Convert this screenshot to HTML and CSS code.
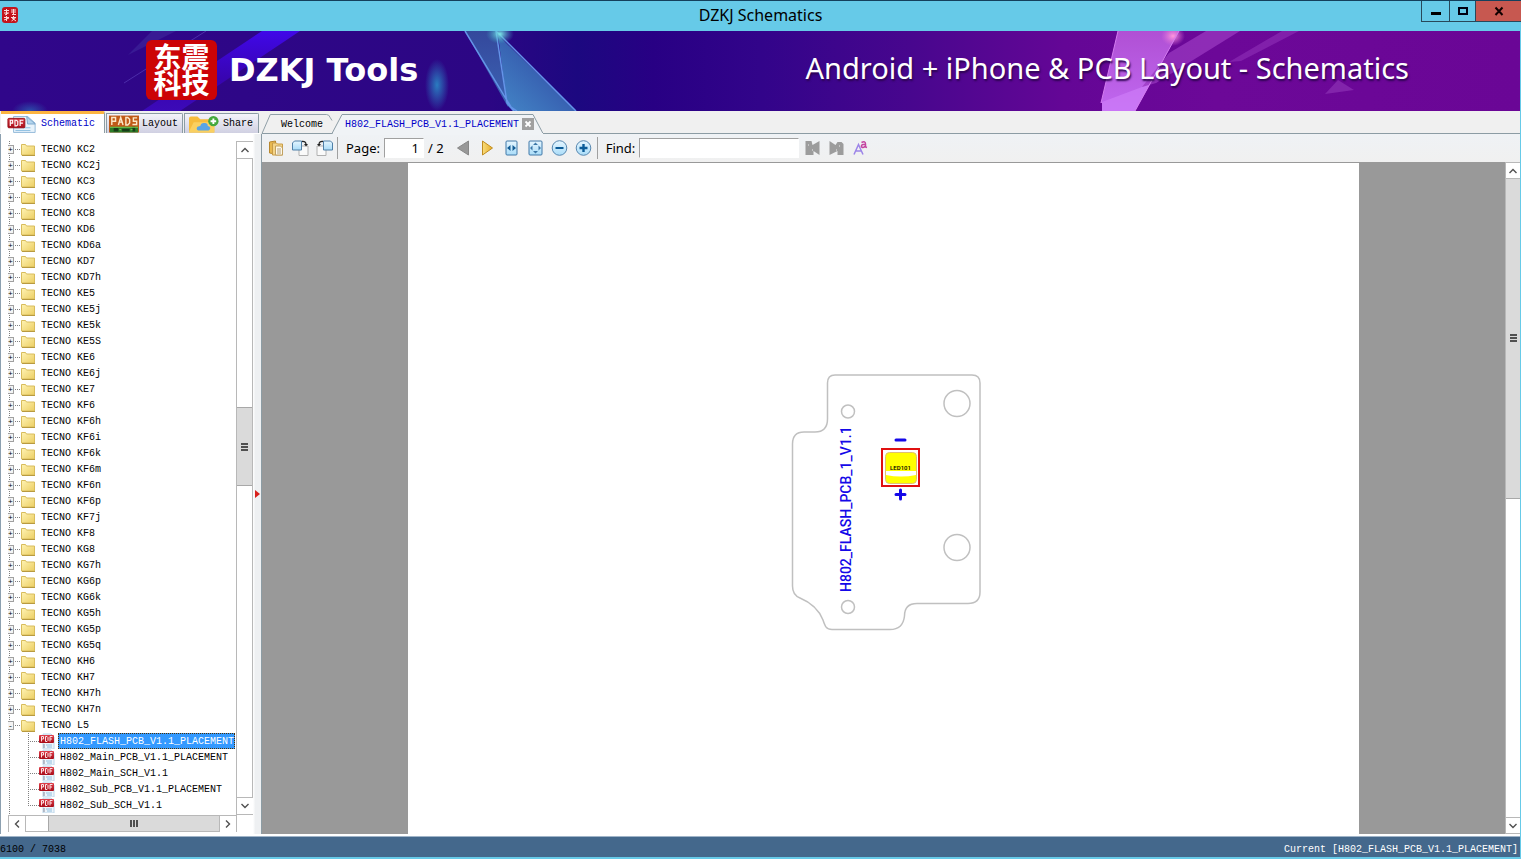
FILE: index.html
```html
<!DOCTYPE html>
<html lang="en">
<head>
<meta charset="utf-8">
<title>DZKJ Schematics</title>
<link rel="stylesheet" href="styles.css">
</head>
<body>
<svg class="defs" aria-hidden="true">
  <defs>
    <linearGradient id="gFolder" x1="0" y1="0" x2="1" y2="1"><stop offset="0" stop-color="#fff3b4"/><stop offset="1" stop-color="#ecce62"/></linearGradient>
    <linearGradient id="gPdf" x1="0" y1="0" x2="0" y2="1"><stop offset="0" stop-color="#e0404c"/><stop offset="1" stop-color="#a80c18"/></linearGradient>
    <linearGradient id="gBlue" x1="0" y1="0" x2="0" y2="1"><stop offset="0" stop-color="#e6f6ff"/><stop offset="1" stop-color="#a9dcf8"/></linearGradient>
    <linearGradient id="gGold" x1="0" y1="0" x2="1" y2="0"><stop offset="0" stop-color="#f8dc7c"/><stop offset="1" stop-color="#e8ae28"/></linearGradient>
  </defs>
  <symbol id="folder" viewBox="0 0 14 13"><path d="M.5 1.5h4l1 1.500h8v9H.5z" fill="url(#gFolder)" stroke="#d8bc5c"/><path d="M1 12.500h13" stroke="#b89a40"/></symbol>
  <symbol id="pdf" viewBox="0 0 16 16"><path d="M4 1h8l3 3v12H4z" fill="#edf5fb" stroke="#bcd6ea"/><path d="M7 12h6M8 14h5" stroke="#90bede"/><path d="M5 11v4" stroke="#889"/><rect x="0" y="2" width="15" height="8" rx="1" fill="url(#gPdf)"/><path d="M2.500 8.500v-5h2v2.500h-2M6.500 3.500v5h1.500l1-1v-3l-1-1zM11 8.500v-5h2.500M11 6h2" fill="none" stroke="#fbe3e5"/></symbol>
  <symbol id="up" viewBox="0 0 10 6"><path d="M1.500 5L5 1.500 8.500 5" fill="none" stroke="#505050" stroke-width="1.400"/></symbol>
</svg>

<div class="window">
  <header class="titlebar">
    <svg class="app-icon" viewBox="0 0 16 16"><rect width="16" height="16" rx="3" fill="#c4141c"/><path d="M2 3.500h5M2 6h5M4.500 2v6M3 8l3-2M9 3h5M9 5h5M10 7.500h4M11.500 2v5M2 10.500h5M4.500 9v5M2 13l5-2M9 10.500h5M11.500 9v3M9.500 14l4-3M10 11l4 3" stroke="#fbdada" fill="none"/></svg>
    <h1 class="title">DZKJ Schematics</h1>
    <div class="win-buttons">
      <button class="wb wb-min" aria-label="Minimize"><svg viewBox="0 0 10 10"><path d="M0 7.500h10" stroke="#000" stroke-width="3"/></svg></button>
      <button class="wb wb-max" aria-label="Maximize"><svg viewBox="0 0 10 10"><rect x="1" y="2" width="8" height="6" fill="none" stroke="#001" stroke-width="2"/></svg></button>
      <button class="wb wb-close" aria-label="Close"><svg viewBox="0 0 10 10"><path d="M1.500 1.500l7 7.500M8.500 1.500l-7 7.500" stroke="#100" stroke-width="2"/></svg></button>
    </div>
  </header>

  <div class="banner">
    <svg class="banner-art" viewBox="0 0 1520 80" preserveAspectRatio="none" aria-hidden="true">
      <defs>
        <linearGradient id="gBan" x1="0" x2="1" y1="0" y2="0"><stop offset="0" stop-color="#30068a"/><stop offset=".32" stop-color="#2c0684"/><stop offset=".38" stop-color="#1c0880"/><stop offset=".43" stop-color="#280084"/><stop offset=".5" stop-color="#32048a"/><stop offset=".6" stop-color="#48068e"/><stop offset=".7" stop-color="#640696"/><stop offset=".8" stop-color="#6c0898"/><stop offset="1" stop-color="#6a0696"/></linearGradient>
        <linearGradient id="gShard" x1="0" x2="0" y1="0" y2="1"><stop offset="0" stop-color="#34489c"/><stop offset="1" stop-color="#3c64b4"/></linearGradient>
        <linearGradient id="gShard2" x1="0" x2="1" y1="1" y2="0"><stop offset="0" stop-color="#4488c8"/><stop offset="1" stop-color="#2c3c9c"/></linearGradient>
        <linearGradient id="gRay" x1="0" x2="0" y1="0" y2="1"><stop offset="0" stop-color="#4008e8"/><stop offset=".6" stop-color="#3804b0"/><stop offset="1" stop-color="#3c0ab8"/></linearGradient>
        <linearGradient id="gPink" x1="0" x2="0" y1="0" y2="1"><stop offset="0" stop-color="#b050d4"/><stop offset="1" stop-color="#c068f0"/></linearGradient>
        <radialGradient id="gGlow"><stop offset="0" stop-color="#2a7cc0"/><stop offset="1" stop-color="#2a7cc0" stop-opacity="0"/></radialGradient>
        <radialGradient id="gTeal"><stop offset="0" stop-color="#7ce8e8"/><stop offset="1" stop-color="#3aa0c0" stop-opacity="0"/></radialGradient>
        <radialGradient id="gRose"><stop offset="0" stop-color="#ff98dc"/><stop offset="1" stop-color="#e070d8" stop-opacity="0"/></radialGradient>
      </defs>
      <rect width="1520" height="80" fill="url(#gBan)"/>
      <path d="M262 0h38L180 80h-38z" fill="url(#gRay)"/>
      <path d="M152 0h24L128 24z" fill="#40289c" opacity=".6"/>
      <path d="M206 0L124 52" stroke="#6a54cc" opacity=".5"/>
      <ellipse cx="30" cy="80" rx="18" ry="10" fill="url(#gGlow)" opacity=".6"/>
      <ellipse cx="437" cy="54" rx="12" ry="26" fill="url(#gGlow)"/>
      <path d="M465 0h31l12 76-8-14z" fill="url(#gShard)"/>
      <path d="M498 4l9 70 6 6h63z" fill="url(#gShard2)"/>
      <path d="M465 0l46 76 6 4M496 0l11 72 7 8M496 0l80 80" stroke="#6494e8" stroke-width="1.500" fill="none"/>
      <ellipse cx="500" cy="3" rx="14" ry="10" fill="url(#gTeal)"/>
      <path d="M1118 0h61l-44 80h-33v-8h-1z" fill="url(#gPink)"/>
      <path d="M1102 71l48-18-15 27h-33z" fill="#d080fa" opacity=".6"/>
      <path d="M1206 0h34l-84 52-14 4 27-34z" fill="#9a38c0" opacity=".75"/>
      <path d="M1282 0h17l-58 30-12 1z" fill="#9030b8" opacity=".6"/>
      <path d="M1338 49l16 10-29 4z" fill="#8c30b4" opacity=".7"/>
      <ellipse cx="1173" cy="5" rx="12" ry="10" fill="url(#gRose)"/>
      <path d="M1118 0l-17 72M1179 0l-44 80" stroke="#d47cf0" fill="none"/>
    </svg>
    <div class="logo">东震<br>科技</div>
    <div class="brand">DZKJ Tools</div>
    <div class="tagline">Android + iPhone &amp; PCB Layout - Schematics</div>
  </div>

  <main class="main">
    <aside class="side">
      <nav class="side-tabs">
        <button class="stab stab-schematic active"><svg class="ic-schem" viewBox="0 0 32 18"><path d="M7 1h15l8 7v10H7z" fill="#e8f3fb" stroke="#90b8d8"/><path d="M21 1l9 8h-8z" fill="#b4d6ee" stroke="#7ca8cc"/><path d="M9 13h16M9 16h16" stroke="#88bce0"/><rect x="1" y="3" width="18" height="10" rx="1" fill="url(#gPdf)" stroke="#980c14"/><path d="M3.500 11V5h2.500v3H3.500M8.500 5v6H10l1.500-1V6L10 5zM14 11V5h3.500M14 8h3" fill="none" stroke="#fff" stroke-width="1.200"/></svg><span>Schematic</span></button>
        <button class="stab stab-layout"><svg class="ic-pads" viewBox="0 0 32 18"><rect width="32" height="18" fill="#c05a18"/><path d="M3 10V2h4v4H3M10 10l2.500-8L15 10M11 7h3M18 2v8h2l2-2V4l-2-2zM30 2.500h-4V6h3.500v3.500H25" fill="none" stroke="#fbe8c8" stroke-width="1.500"/><path d="M1 12h30v6H1z" fill="#2c7c28"/><path d="M5 13h5v4H5zM14 14h8v3h-8zM25 12h3v5h-3z" fill="#183c18"/><path d="M1 12.500h30M11 15h2M23 15h2" stroke="#78cc50"/></svg><span>Layout</span></button>
        <button class="stab stab-share"><svg class="ic-share" viewBox="0 0 32 18"><path d="M0 3q0-2 2-2h7l3 3h13q2 0 2 2v12H0z" fill="#f6bc3c"/><path d="M0 17L5 7h22v11H0z" fill="#fad060"/><path d="M10 16q-3-1-1-4 2-1 3-1 1-4 5-3 3 0 3 3 4 1 2 4-1 1-3 1z" fill="#58a4e4"/><circle cx="26" cy="6" r="5.500" fill="#44a83c"/><path d="M26 3v6M23 6h6" stroke="#fff" stroke-width="2"/></svg><span>Share</span></button>
      </nav>
      <div class="side-body">
        <div class="tree-area">
          <ul class="tree">
            <li><button class="exp" aria-label="Expand">+</button><svg class="folder"><use href="#folder"/></svg>TECNO KC2</li>
            <li><button class="exp" aria-label="Expand">+</button><svg class="folder"><use href="#folder"/></svg>TECNO KC2j</li>
            <li><button class="exp" aria-label="Expand">+</button><svg class="folder"><use href="#folder"/></svg>TECNO KC3</li>
            <li><button class="exp" aria-label="Expand">+</button><svg class="folder"><use href="#folder"/></svg>TECNO KC6</li>
            <li><button class="exp" aria-label="Expand">+</button><svg class="folder"><use href="#folder"/></svg>TECNO KC8</li>
            <li><button class="exp" aria-label="Expand">+</button><svg class="folder"><use href="#folder"/></svg>TECNO KD6</li>
            <li><button class="exp" aria-label="Expand">+</button><svg class="folder"><use href="#folder"/></svg>TECNO KD6a</li>
            <li><button class="exp" aria-label="Expand">+</button><svg class="folder"><use href="#folder"/></svg>TECNO KD7</li>
            <li><button class="exp" aria-label="Expand">+</button><svg class="folder"><use href="#folder"/></svg>TECNO KD7h</li>
            <li><button class="exp" aria-label="Expand">+</button><svg class="folder"><use href="#folder"/></svg>TECNO KE5</li>
            <li><button class="exp" aria-label="Expand">+</button><svg class="folder"><use href="#folder"/></svg>TECNO KE5j</li>
            <li><button class="exp" aria-label="Expand">+</button><svg class="folder"><use href="#folder"/></svg>TECNO KE5k</li>
            <li><button class="exp" aria-label="Expand">+</button><svg class="folder"><use href="#folder"/></svg>TECNO KE5S</li>
            <li><button class="exp" aria-label="Expand">+</button><svg class="folder"><use href="#folder"/></svg>TECNO KE6</li>
            <li><button class="exp" aria-label="Expand">+</button><svg class="folder"><use href="#folder"/></svg>TECNO KE6j</li>
            <li><button class="exp" aria-label="Expand">+</button><svg class="folder"><use href="#folder"/></svg>TECNO KE7</li>
            <li><button class="exp" aria-label="Expand">+</button><svg class="folder"><use href="#folder"/></svg>TECNO KF6</li>
            <li><button class="exp" aria-label="Expand">+</button><svg class="folder"><use href="#folder"/></svg>TECNO KF6h</li>
            <li><button class="exp" aria-label="Expand">+</button><svg class="folder"><use href="#folder"/></svg>TECNO KF6i</li>
            <li><button class="exp" aria-label="Expand">+</button><svg class="folder"><use href="#folder"/></svg>TECNO KF6k</li>
            <li><button class="exp" aria-label="Expand">+</button><svg class="folder"><use href="#folder"/></svg>TECNO KF6m</li>
            <li><button class="exp" aria-label="Expand">+</button><svg class="folder"><use href="#folder"/></svg>TECNO KF6n</li>
            <li><button class="exp" aria-label="Expand">+</button><svg class="folder"><use href="#folder"/></svg>TECNO KF6p</li>
            <li><button class="exp" aria-label="Expand">+</button><svg class="folder"><use href="#folder"/></svg>TECNO KF7j</li>
            <li><button class="exp" aria-label="Expand">+</button><svg class="folder"><use href="#folder"/></svg>TECNO KF8</li>
            <li><button class="exp" aria-label="Expand">+</button><svg class="folder"><use href="#folder"/></svg>TECNO KG8</li>
            <li><button class="exp" aria-label="Expand">+</button><svg class="folder"><use href="#folder"/></svg>TECNO KG7h</li>
            <li><button class="exp" aria-label="Expand">+</button><svg class="folder"><use href="#folder"/></svg>TECNO KG6p</li>
            <li><button class="exp" aria-label="Expand">+</button><svg class="folder"><use href="#folder"/></svg>TECNO KG6k</li>
            <li><button class="exp" aria-label="Expand">+</button><svg class="folder"><use href="#folder"/></svg>TECNO KG5h</li>
            <li><button class="exp" aria-label="Expand">+</button><svg class="folder"><use href="#folder"/></svg>TECNO KG5p</li>
            <li><button class="exp" aria-label="Expand">+</button><svg class="folder"><use href="#folder"/></svg>TECNO KG5q</li>
            <li><button class="exp" aria-label="Expand">+</button><svg class="folder"><use href="#folder"/></svg>TECNO KH6</li>
            <li><button class="exp" aria-label="Expand">+</button><svg class="folder"><use href="#folder"/></svg>TECNO KH7</li>
            <li><button class="exp" aria-label="Expand">+</button><svg class="folder"><use href="#folder"/></svg>TECNO KH7h</li>
            <li><button class="exp" aria-label="Expand">+</button><svg class="folder"><use href="#folder"/></svg>TECNO KH7n</li>
            <li><button class="exp" aria-label="Collapse">-</button><svg class="folder"><use href="#folder"/></svg>TECNO L5</li>
            <li class="file"><svg class="pdf"><use href="#pdf"/></svg><span class="name selected">H802_FLASH_PCB_V1.1_PLACEMENT</span></li>
            <li class="file"><svg class="pdf"><use href="#pdf"/></svg><span class="name">H802_Main_PCB_V1.1_PLACEMENT</span></li>
            <li class="file"><svg class="pdf"><use href="#pdf"/></svg><span class="name">H802_Main_SCH_V1.1</span></li>
            <li class="file"><svg class="pdf"><use href="#pdf"/></svg><span class="name">H802_Sub_PCB_V1.1_PLACEMENT</span></li>
            <li class="file"><svg class="pdf"><use href="#pdf"/></svg><span class="name">H802_Sub_SCH_V1.1</span></li>
          </ul>
          <div class="scroll scroll-v">
            <button class="sbtn" aria-label="Scroll up"><svg class="chev"><use href="#up"/></svg></button>
            <div class="track tree-track"><div class="thumb"><i class="grip"></i></div></div>
            <button class="sbtn" aria-label="Scroll down"><svg class="chev down"><use href="#up"/></svg></button>
          </div>
        </div>
        <div class="scroll scroll-h">
          <button class="sbtn" aria-label="Scroll left"><svg class="chev left"><use href="#up"/></svg></button>
          <div class="track h-track"><div class="thumb"><i class="grip grip-h"></i></div></div>
          <button class="sbtn" aria-label="Scroll right"><svg class="chev right"><use href="#up"/></svg></button>
        </div>
      </div>
    </aside>
    <div class="splitter"><svg viewBox="0 0 5 8"><path d="M0 0l5 4-5 4z" fill="#d8201c"/></svg></div>

    <section class="work">
      <nav class="doc-tabs">
        <button class="dtab dtab-welcome"><svg class="outline" viewBox="0 0 76 20" preserveAspectRatio="none"><path d="M0 19.500L9 .5h61q3 0 4 3l2 3" fill="none" stroke="#8c9ca4"/></svg><span>Welcome</span></button>
        <button class="dtab dtab-doc"><svg class="outline" viewBox="0 0 212 20" preserveAspectRatio="none"><path d="M0 19.500L10 .5h191l10 19" fill="#f0f3f6" stroke="#8c9ca4"/><path d="M1 20h210" stroke="#f0f3f6" stroke-width="2"/></svg><span>H802_FLASH_PCB_V1.1_PLACEMENT</span><i class="tab-x"><svg viewBox="0 0 8 8"><path d="M1.500 1.500l5 5M6.500 1.500l-5 5" stroke="#fff" stroke-width="1.800"/></svg></i></button>
      </nav>
      <div class="toolbar">
        <button class="tb" aria-label="Open"><svg viewBox="0 0 16 16"><path d="M1 2l6-1v13l-6-1z" fill="#e8b850" stroke="#b88830"/><path d="M4 3h4l1 1h5v11H4z" fill="#f4d488" stroke="#c89c48"/><path d="M7 6h5l2 2v7H7z" fill="#fff8e8" stroke="#c0a060"/><path d="M8.500 9h4M8.500 11h4M8.500 13h4" stroke="#b0a080"/></svg></button>
        <button class="tb" aria-label="Rotate right"><svg viewBox="0 0 17 16"><path d="M7 6h9v9.500H7z" fill="#fafafa" stroke="#b0b0b0"/><path d="M.5 3l2-2h7v9h-9z" fill="url(#gBlue)" stroke="#5080a8"/><path d="M10 1.500q4-.5 4 3" fill="none" stroke="#222" stroke-width="1.300"/><path d="M12 4h4l-2 2.500z" fill="#222"/></svg></button>
        <button class="tb" aria-label="Rotate left"><svg viewBox="0 0 17 16"><path d="M1 6h9v9.500H1z" fill="#fafafa" stroke="#b0b0b0"/><path d="M7.500 1h7l2 2v7h-9z" fill="url(#gBlue)" stroke="#5080a8"/><path d="M7 1.500q-4-.5-4 3" fill="none" stroke="#222" stroke-width="1.300"/><path d="M1 4h4L3 6.500z" fill="#222"/></svg></button>
        <i class="sep"></i>
        <label class="lbl" for="page">Page:</label>
        <input id="page" class="page-input" type="text" value="1">
        <span class="total">/ 2</span>
        <button class="tb" aria-label="Previous page"><svg viewBox="0 0 16 16"><path d="M13 1v14L2 8z" fill="#989898" stroke="#888"/></svg></button>
        <button class="tb" aria-label="Next page"><svg viewBox="0 0 16 16"><path d="M3 1v14L13 8z" fill="url(#gGold)" stroke="#c08c20"/></svg></button>
        <button class="tb" aria-label="Fit width"><svg viewBox="0 0 16 16"><rect x="2.500" y="1" width="11" height="14" rx="1" fill="url(#gBlue)" stroke="#4078a8"/><path d="M3.500 8L7 5v6zM12.500 8L9 5v6z" fill="#145c94"/></svg></button>
        <button class="tb" aria-label="Fit page"><svg viewBox="0 0 16 16"><rect x="1.500" y="1" width="13" height="14" rx="1" fill="url(#gBlue)" stroke="#4078a8"/><path d="M8 2.500l2.500 2.500h-5zM8 13.500L5.500 11h5zM2.500 8L5 5.500v5zM13.500 8L11 5.500v5z" fill="#3c78a8"/></svg></button>
        <button class="tb" aria-label="Zoom out"><svg viewBox="0 0 16 16"><circle cx="8" cy="8" r="7.300" fill="url(#gBlue)" stroke="#5888b0"/><path d="M4 8h8" stroke="#0c5c98" stroke-width="2"/></svg></button>
        <button class="tb" aria-label="Zoom in"><svg viewBox="0 0 16 16"><circle cx="8" cy="8" r="7.300" fill="url(#gBlue)" stroke="#5888b0"/><path d="M4 8h8M8 4v8" stroke="#0c5c98" stroke-width="2.400"/></svg></button>
        <i class="sep"></i>
        <label class="lbl" for="find">Find:</label>
        <input id="find" class="find-input" type="text">
        <button class="tb" aria-label="Find previous"><svg viewBox="0 0 16 16"><path d="M1 1h6l1 4 7-4v14l-6-4v4H1z" fill="#9c9c9c"/><path d="M4 4v2M8 9v2" stroke="#c4c4c4"/></svg></button>
        <button class="tb" aria-label="Find next"><svg viewBox="0 0 16 16"><path d="M1 1l6 4 2-3h4l2 2v11H9v-4L1 15z" fill="#9c9c9c"/><path d="M11 5v2M8 9v2" stroke="#c4c4c4"/></svg></button>
        <button class="tb" aria-label="Match case"><svg viewBox="0 0 16 16"><path d="M1.500 14.500L6 4.500l4.500 10M3 11h6" fill="none" stroke="#9c84e8" stroke-width="1.500"/><path d="M9 2.500q4-2 4 1.500v3.500M13 4.500h-2.500q-2 .5-1.500 2.300 2 1.600 4-.8M13 7l1.500.5" fill="none" stroke="#c444a0" stroke-width="1.500"/></svg></button>
      </div>
      <div class="viewer">
        <div class="canvas">
          <svg class="sheet" viewBox="408 163 951 671" preserveAspectRatio="xMidYMid meet" role="img" aria-label="H802 flash PCB placement">
            <g fill="none" stroke="#c0c0c0" stroke-width="1.500">
              <path d="M835 375H972Q980 375 980 383V592Q980 603.500 968 603.500H917Q904.500 603.500 904.500 616 903 629.500 890 629.500H832C826 629.500 825 626 823 620 819 610 812 603 800 598Q792.500 595 792.500 586V444Q792.500 432 804 432H815Q827.500 432 827.500 419V383Q827.500 375 835 375Z"/>
              <circle cx="957" cy="403.500" r="13"/><circle cx="957" cy="547.500" r="13"/>
              <circle cx="848" cy="411.500" r="6.500"/><circle cx="848" cy="607" r="6.500"/>
            </g>
            <text class="silk" transform="translate(851 592) rotate(-90)">H802_FLASH_PCB_1_V1.1</text>
            <path d="M896 440h9M896 494.500h9M900.500 490v9" stroke="#1408e8" stroke-width="3" stroke-linecap="round"/>
            <rect x="882" y="449" width="37" height="37" fill="#fff" stroke="#e01010" stroke-width="2"/>
            <rect x="885.500" y="452.500" width="31" height="31" rx="4" fill="#ff0" stroke="#e0c070"/>
            <path d="M886 471h30v4q-15 3-30 0z" fill="#fff"/>
            <text class="led" x="900.500" y="470">LED101</text>
          </svg>
        </div>
        <div class="scroll scroll-v">
          <button class="sbtn" aria-label="Scroll up"><svg class="chev"><use href="#up"/></svg></button>
          <div class="track view-track"><div class="thumb"><i class="grip"></i></div></div>
          <button class="sbtn" aria-label="Scroll down"><svg class="chev down"><use href="#up"/></svg></button>
        </div>
      </div>
    </section>
  </main>

  <footer class="status"><span>6100 / 7038</span><span class="current">Current [H802_FLASH_PCB_V1.1_PLACEMENT]</span></footer>
</div>
</body>
</html>
```
FILE: styles.css
```css
* { box-sizing: border-box; }
body { margin: 0; background: #66cae8; font-family: "Liberation Mono", monospace; font-size: 10px; color: #000; }
button { margin: 0; padding: 0; border: 0; background: none; font: inherit; color: inherit; }
button svg { display: block; }
.defs { position: absolute; width: 0; height: 0; }
.window { height: 100vh; display: flex; flex-direction: column; padding-bottom: 2px; }

.titlebar { height: 31px; flex: none; display: flex; position: relative; border-top: 1px solid #14405c; background: #66cae8; }
.app-icon { width: 16px; height: 16px; margin: 6px 0 0 2px; }
.title { flex: 1; margin: 0; text-align: center; font: 400 16px/29px "Noto Sans", "Open Sans", sans-serif; padding-left: 82px; }
.win-buttons { display: flex; height: 21px; border: 1px solid #28485a; border-width: 0 0 1px 1px; }
.wb { display: flex; align-items: center; justify-content: center; border-right: 1px solid #28485a; }
.wb svg { width: 10px; height: 10px; }
.wb-min { width: 28px; }
.wb-max { width: 26px; }
.wb-close { width: 45px; background: #c75850; border-right: 0; }

.banner { height: 80px; flex: none; display: flex; align-items: center; position: relative; margin-right: 1px; padding: 0 111px 2px 146px; overflow: hidden; color: #fff; font-family: "Noto Sans", "Open Sans", sans-serif; }
.banner-art { position: absolute; inset: 0; width: 100%; height: 100%; }
.logo, .brand, .tagline { position: relative; white-space: nowrap; }
.logo { width: 71px; height: 60px; border-radius: 6px; background: #cc0406; text-align: center; font: 700 28px/26px "Noto Sans CJK SC", sans-serif; padding-top: 3px; }
.brand { margin-left: 12px; font: 700 32px/40px "DejaVu Sans", sans-serif; }
.tagline { margin-left: auto; padding-bottom: 6px; font-size: 29px; text-shadow: 1px 2px 2px #2c0450; }

.main { flex: 1; min-height: 0; display: flex; margin-right: 1px; background: #f0f0f0; border-bottom: 2px solid #fff; }
.side { width: 253px; flex: none; display: flex; flex-direction: column; }
.side-tabs { display: flex; height: 23px; flex: none; margin-right: -7px; gap: 1px; padding-left: 1px; border-bottom: 1px solid #fff; font-size: 10px; }
.stab { display: flex; align-items: center; white-space: nowrap; border: 1px solid #8c9ca4; border-bottom: 0; border-radius: 0 2px 0 0; margin-top: 2px; background: linear-gradient(#f4f4fa, #d0d0e2); }
.stab svg { width: 30px; height: 18px; flex: none; }
.stab.active { margin-top: 0; width: 104px; border-top: 3px solid #fcb440; border-left: 0; background: #fff; color: #0000c8; padding-left: 6px; gap: 4px; }
.stab-layout { width: 77px; padding-left: 2px; gap: 3px; }
.stab-share { width: 75px; padding-left: 4px; gap: 4px; }
.side-body { flex: 1; min-height: 0; display: flex; flex-direction: column; padding: 7px 0 2px 7px; background: #fff; border-left: 1px solid #8ca0b0; }
.tree-area { flex: 1; min-height: 0; display: flex; }
.tree { flex: 1; min-width: 0; margin: 0; padding: 0; list-style: none; overflow: hidden; background: repeating-linear-gradient(#808080 0 1px, transparent 1px 2px) 1px 0 / 1px 100% no-repeat; }
.tree li { height: 16px; padding-top: 2px; line-height: 14px; display: flex; align-items: center; white-space: pre; }
.tree li > button, .tree li > svg { margin-bottom: 2px; flex: none; }
.exp { width: 6px; height: 9px; border: 1px solid #a0a0a0; border-left: 0; background: #f4f4f4; font-size: 8px; line-height: 7px; }
.folder { width: 21px; height: 13px; padding-left: 7px; margin-right: 6px; background: repeating-linear-gradient(90deg, #808080 0 1px, transparent 1px 2px) 1px 6px / 6px 1px no-repeat; }
.tree .file { padding-top: 0; padding-left: 20px; background: repeating-linear-gradient(#808080 0 1px, transparent 1px 2px) 20px 0 / 1px 100% no-repeat; }
.tree .file:last-child { background-size: 1px 8px; }
.tree .file > .pdf { width: 27px; height: 16px; margin: 0; padding-left: 11px; background: repeating-linear-gradient(90deg, #808080 0 1px, transparent 1px 2px) 0 8px / 11px 1px no-repeat; }
.name { height: 16px; margin-left: 3px; padding: 2px 1px 0 2px; }
.name.selected { background: #3399ff; color: #fff; outline: 1px dotted #503000; outline-offset: -1px; }

.scroll { display: flex; background: #fff; }
.scroll-v { width: 17px; flex: none; flex-direction: column; border: 1px solid #b8b8b8; }
.scroll-h { height: 17px; flex: none; margin-right: 16px; border: 1px solid #b8b8b8; }
.sbtn { width: 16px; height: 16px; flex: none; display: flex; align-items: center; justify-content: center; background: #fff; }
.chev { width: 10px; height: 6px; }
.down { transform: rotate(180deg); }
.left { transform: rotate(-90deg); }
.right { transform: rotate(90deg); }
.track { flex: 1; display: flex; border: 1px solid #b8b8b8; border-width: 1px 0; }
.scroll-v .track { flex-direction: column; }
.track::before, .track::after { content: ""; }
.thumb { display: flex; align-items: center; justify-content: center; background: #dadada; border: 1px solid #a8a8a8; border-width: 1px 0; }
.grip { width: 7px; height: 8px; background: repeating-linear-gradient(#505050 0 2px, transparent 2px 3px); }
.grip-h { width: 8px; height: 7px; background: repeating-linear-gradient(90deg, #505050 0 2px, transparent 2px 3px); }
.tree-track::before { flex: 250; } .tree-track .thumb { flex: 77; } .tree-track::after { flex: 313; }
.h-track { border-width: 0 1px; }
.h-track::before { flex: 22; } .h-track .thumb { flex: 172; border-width: 0 0 0 1px; } .h-track::after { flex: 0; }
.view-track .thumb { flex: 321; border-top: 0; } .view-track::after { flex: 321; }

.splitter { width: 9px; flex: none; display: flex; align-items: center; justify-content: center; margin-top: 23px; padding-top: 20px; background: linear-gradient(90deg, #fff, #eef0f2 30%); border-right: 1px solid #8c9ca4; }
.splitter svg { width: 5px; height: 8px; }

.work { flex: 1; min-width: 0; display: flex; flex-direction: column; }
.doc-tabs { height: 23px; flex: none; display: flex; align-items: flex-end; border-bottom: 1px solid #8c9ca4; }
.dtab { height: 20px; position: relative; display: flex; align-items: center; margin-bottom: -1px; }
.dtab span, .tab-x { position: relative; }
.outline { position: absolute; inset: 0; width: 100%; height: 100%; overflow: visible; }
.dtab-welcome { width: 70px; padding-left: 19px; }
.dtab-doc { width: 212px; padding-left: 13px; gap: 3px; color: #0000c8; }
.tab-x { width: 12px; height: 12px; display: flex; align-items: center; justify-content: center; background: #a0a0a0; }
.tab-x svg { width: 8px; height: 8px; }
.toolbar { height: 28px; flex: none; display: flex; align-items: center; padding-left: 2px; background: linear-gradient(#eff2f5, #f0f0f0); font: 13px/18px "Noto Sans", "Open Sans", sans-serif; }
.tb { width: 24px; height: 24px; flex: none; display: flex; align-items: center; justify-content: center; }
.tb svg { width: 17px; height: 16px; }
.sep { width: 1px; height: 22px; margin: 0 8px 0 1px; background: #a0a0a0; }
.lbl { margin-right: 4px; }
input { border: 1px solid #fff; border-top-color: #a0a0a0; border-left-color: #a0a0a0; border-radius: 0; background: #fff; font: inherit; height: 20px; padding: 0 4px; outline: 0; }
.page-input { width: 40px; text-align: right; }
.total { margin: 0 8px 0 4px; }
.find-input { width: 160px; margin-right: 1px; }
.viewer { flex: 1; min-height: 0; display: flex; }
.canvas { flex: 1; min-width: 0; display: flex; justify-content: center; padding: 1px 146px 0; background: #999; }
.sheet { width: 100%; height: 100%; background: #fff; }
.viewer .scroll-v { width: 15px; border-right: 0; }
.viewer .sbtn { width: 14px; height: 15px; }
.silk { font: 500 14px Roboto, sans-serif; fill: #1408e8; }
.led { font: 500 6px Roboto, sans-serif; fill: #000; text-anchor: middle; }

.status { height: 21px; flex: none; display: flex; justify-content: space-between; align-items: center; padding: 4px 2px 0 0; margin-right: 1px; background: #44688c; border-top: 1px solid #a0b4c8; }
.current { color: #fff; }
```
